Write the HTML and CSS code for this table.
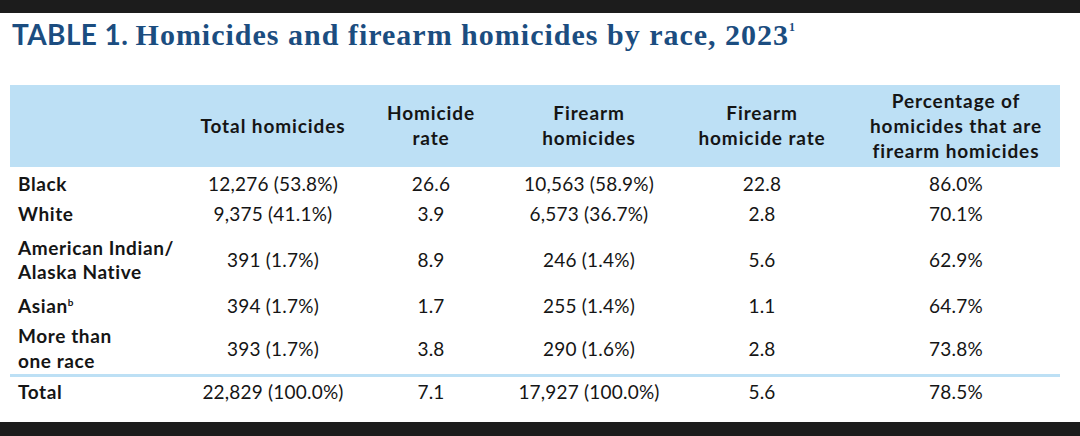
FILE: index.html
```html
<!DOCTYPE html>
<html lang="en">
<head>
<meta charset="utf-8">
<title>Table 1</title>
<link rel="stylesheet" href="styles.css">
</head>
<body>
<div class="page">
  <h1 class="title"><span class="tag">TABLE 1.</span> <span class="serif">Homicides and firearm homicides by race, 2023<sup>1</sup></span></h1>
  <table class="data">
    <colgroup>
      <col class="c0"><col class="c1"><col class="c2"><col class="c3"><col class="c4"><col class="c5">
    </colgroup>
    <thead>
      <tr>
        <th></th>
        <th>Total homicides</th>
        <th>Homicide<br>rate</th>
        <th>Firearm<br>homicides</th>
        <th>Firearm<br>homicide rate</th>
        <th>Percentage of<br>homicides that are<br>firearm homicides</th>
      </tr>
    </thead>
    <tbody>
      <tr class="r1"><td class="lab">Black</td><td>12,276 (53.8%)</td><td>26.6</td><td>10,563 (58.9%)</td><td>22.8</td><td>86.0%</td></tr>
      <tr class="r2"><td class="lab">White</td><td>9,375 (41.1%)</td><td>3.9</td><td>6,573 (36.7%)</td><td>2.8</td><td>70.1%</td></tr>
      <tr class="r3"><td class="lab">American Indian/<br>Alaska Native</td><td>391 (1.7%)</td><td>8.9</td><td>246 (1.4%)</td><td>5.6</td><td>62.9%</td></tr>
      <tr class="r4"><td class="lab">Asian<sup>b</sup></td><td>394 (1.7%)</td><td>1.7</td><td>255 (1.4%)</td><td>1.1</td><td>64.7%</td></tr>
      <tr class="r5"><td class="lab">More than<br>one race</td><td>393 (1.7%)</td><td>3.8</td><td>290 (1.6%)</td><td>2.8</td><td>73.8%</td></tr>
      <tr class="total"><td class="lab">Total</td><td>22,829 (100.0%)</td><td>7.1</td><td>17,927 (100.0%)</td><td>5.6</td><td>78.5%</td></tr>
    </tbody>
  </table>
</div>
</body>
</html>
```
FILE: styles.css
```css
html, body {
  margin: 0;
  padding: 0;
  background: #1c1c1c;
}
.page {
  margin-top: 13px;
  height: 409px;
  background: #ffffff;
  padding: 0 20px 0 10px;
  box-sizing: border-box;
  font-family: "Lato", "Open Sans", sans-serif;
  color: #151515;
}
.title {
  margin: 0;
  padding: 0 0 0 2px;
  height: 72px;
  box-sizing: border-box;
  font-size: 30px;
  line-height: 40px;
  color: #1b4d80;
  font-weight: 700;
  white-space: nowrap;
}
.title .tag {
  font-family: "Lato", sans-serif;
  font-weight: 700;
  font-size: 28px;
  letter-spacing: 0.4px;
}
.title .serif {
  font-family: "Liberation Serif", serif;
  font-weight: 700;
  letter-spacing: 1px;
}
.title sup {
  font-size: 12px;
  vertical-align: 14px;
  line-height: 0;
  letter-spacing: 0;
}
.data {
  border-collapse: collapse;
  table-layout: fixed;
  width: 1050px;
  font-size: 19px;
}
.c0 { width: 180px; }
.c1 { width: 166px; }
.c2 { width: 150px; }
.c3 { width: 166px; }
.c4 { width: 180px; }
.c5 { width: 208px; }
.data thead tr {
  background: #bde0f5;
  height: 82px;
}
.data th {
  font-weight: 700;
  line-height: 25px;
  text-align: center;
  vertical-align: middle;
  padding: 2px 0 4px;
  letter-spacing: 0.9px;
}
.data td {
  text-align: center;
  vertical-align: middle;
  line-height: 24px;
  padding-top: 3px;
  padding-bottom: 3px;
  font-weight: 400;
  letter-spacing: 0.2px;
}
.data td.lab {
  text-align: left;
  font-weight: 700;
  padding-left: 8px;
  letter-spacing: 0.6px;
}
.data .r1 td { padding-top: 5px; }
.data .r3 td { padding-top: 7px; padding-bottom: 7px; }
.data .r5 td { padding-top: 2px; padding-bottom: 1px; line-height: 25px; }
.data .total td {
  border-top: 3px solid #bde0f5;
}
.data sup {
  font-size: 10px;
  vertical-align: 7px;
  line-height: 0;
}
```
